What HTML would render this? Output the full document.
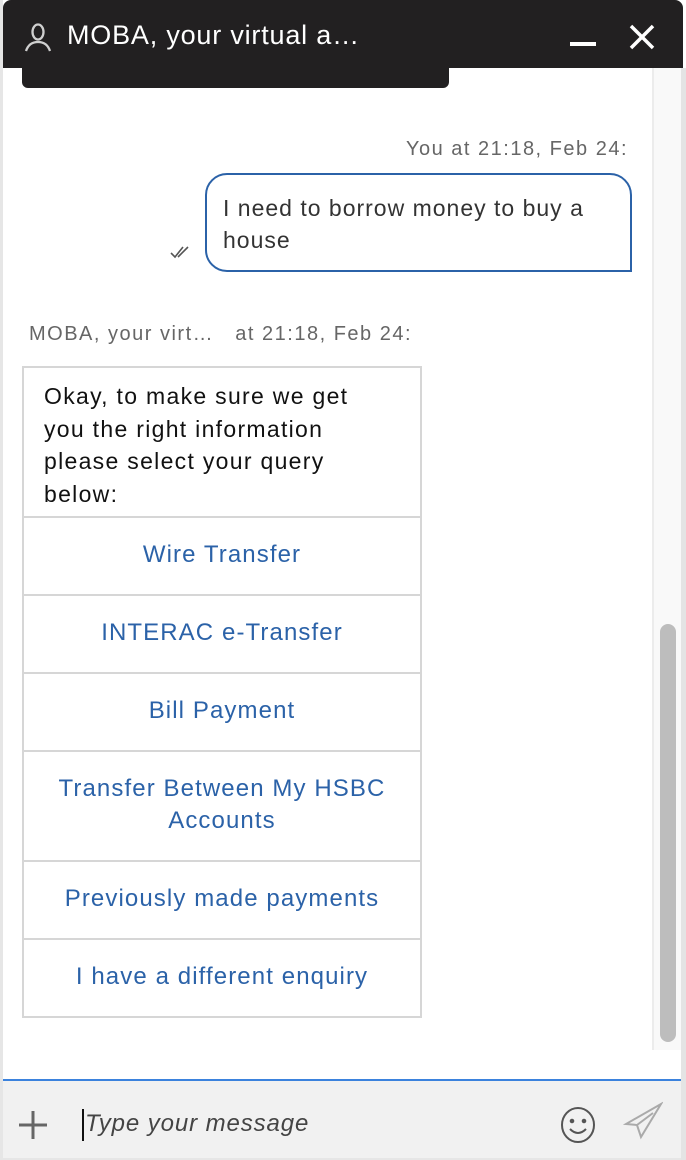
<!DOCTYPE html>
<html><head><meta charset="utf-8"><style>
*{margin:0;padding:0;box-sizing:border-box}
body{width:686px;height:1160px;background:#e6e6e6;font-family:"Liberation Sans",Arial,sans-serif;position:relative;overflow:hidden}
.win{position:absolute;left:3px;top:0;width:683px;height:1158px;background:#fff}
.hdr{position:absolute;left:3px;top:0;width:680px;height:68px;background:#222021;border-radius:8px 8px 0 0;color:#fff}
.hdr .t{position:absolute;left:64px;top:20px;font-size:27px;letter-spacing:0.8px}
.blk{position:absolute;left:22px;top:68px;width:427px;height:20px;background:#222021;border-radius:0 0 6px 6px}
.track{position:absolute;left:652px;top:68px;width:29px;height:982px;background:#f9f9f9;border-left:2px solid #ececec}
.thumb{position:absolute;left:660px;top:624px;width:16px;height:418px;background:#bdbdbd;border-radius:8px}
.rb{position:absolute;left:681px;top:68px;width:5px;height:1092px;background:#e4e4e4}
.meta{position:absolute;font-size:20px;color:#666;letter-spacing:1.5px;white-space:nowrap}
.bub{position:absolute;left:205px;top:173px;width:427px;height:99px;border:2px solid #2b62a8;border-radius:22px 22px 0 22px;font-size:23px;color:#333;padding:17px 16px;line-height:32px;letter-spacing:1px}
.card{position:absolute;left:22px;top:366px;width:400px;border:2px solid #d6d6d6;background:#fff}
.card .q{padding:12px 35px 0 20px;height:150px;font-size:23px;line-height:32.5px;color:#111;border-bottom:2px solid #d6d6d6;letter-spacing:1.3px}
.card .b{display:flex;align-items:center;justify-content:center;text-align:center;color:#2b62a8;font-size:24px;line-height:32px;border-bottom:2px solid #d6d6d6;height:78px;letter-spacing:1.1px;padding-bottom:3px}
.card .b:last-child{border-bottom:none;height:76px}
.inp{position:absolute;left:3px;top:1079px;width:678px;height:79px;background:#f1f1f1;border-top:2px solid #3b82dd}
</style></head><body>
<div class="win"></div>
<div class="track"></div><div class="thumb"></div><div class="rb"></div>
<div class="hdr">
<svg style="position:absolute;left:20px;top:22px" width="30" height="30" viewBox="0 0 30 30" fill="none" stroke="#cfcfcf" stroke-width="2.3"><ellipse cx="15" cy="10" rx="5.5" ry="7.5"/><path d="M3 29 Q6 20 15 20 Q24 20 27 29"/></svg>
<div class="t">MOBA, your virtual a…</div>
<div style="position:absolute;left:567px;top:42px;width:26px;height:4px;background:#fff"></div>
<svg style="position:absolute;left:626px;top:24px" width="26" height="26" viewBox="0 0 26 26" stroke="#fff" stroke-width="3.5"><path d="M2 2L24 24M24 2L2 24"/></svg>
</div>
<div class="blk"></div>
<div class="meta" style="right:58px;top:138px">You at 21:18, Feb 24:</div>
<svg style="position:absolute;left:170px;top:245px" width="24" height="14" viewBox="0 0 24 14" fill="none" stroke="#555" stroke-width="1.6"><path d="M1 8L5 12L13 2M8 12L18 2"/></svg>
<div class="bub">I need to borrow money to buy a house</div>
<div class="meta" style="left:29px;top:323px">MOBA, your virt…&nbsp;&nbsp;&nbsp;at 21:18, Feb 24:</div>
<div class="card">
<div class="q">Okay, to make sure we get you the right information please select your query below:</div>
<div class="b">Wire Transfer</div>
<div class="b">INTERAC e-Transfer</div>
<div class="b">Bill Payment</div>
<div class="b" style="height:110px">Transfer Between My HSBC<br>Accounts</div>
<div class="b">Previously made payments</div>
<div class="b">I have a different enquiry</div>
</div>
<div class="inp">
<svg style="position:absolute;left:14px;top:28px" width="32" height="32" viewBox="0 0 32 32" stroke="#666" stroke-width="3"><path d="M16 2V30M2 16H30"/></svg>
<div style="position:absolute;left:79px;top:28px;width:2px;height:32px;background:#111"></div>
<div style="position:absolute;left:82px;top:29px;font-size:24px;font-style:italic;color:#444;letter-spacing:0.9px">Type your message</div>
<svg style="position:absolute;left:556px;top:24px" width="38" height="40" viewBox="0 0 38 40" fill="none" stroke="#555" stroke-width="2"><ellipse cx="19" cy="20" rx="16" ry="17"/><circle cx="13" cy="16" r="1.3" fill="#555"/><circle cx="25" cy="16" r="1.3" fill="#555"/><path d="M11 24Q19 32 27 24"/></svg>
<svg style="position:absolute;left:620px;top:20px" width="40" height="40" viewBox="0 0 40 40" fill="none" stroke="#aaa" stroke-width="2"><path d="M38 3L3 23L14 24L18 36L38 3Z M14 24L30 12"/></svg>
</div>
</body></html>
